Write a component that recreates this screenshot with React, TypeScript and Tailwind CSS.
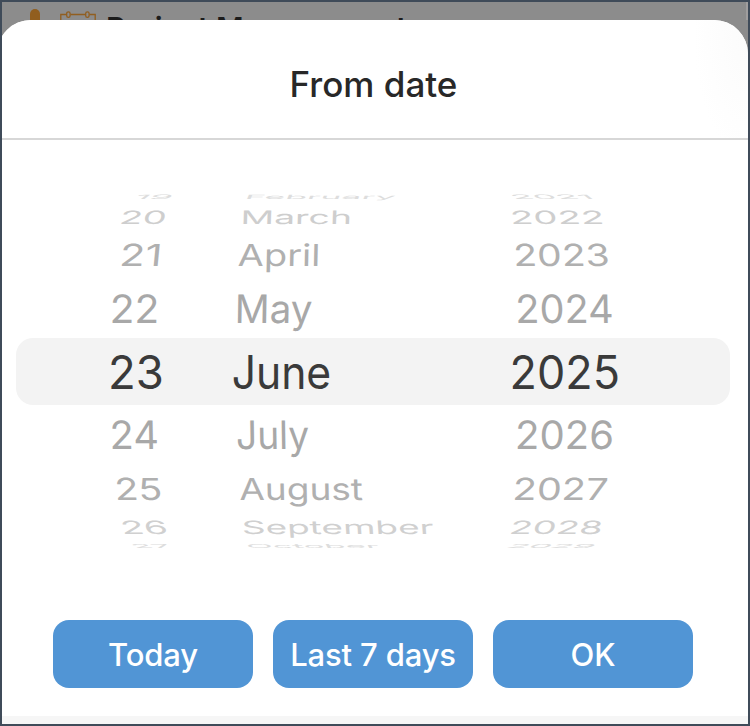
import { useMemo } from 'react'

interface WheelItem {
  text: string
  x: number
  width: number
  skew?: number
}

interface WheelRow {
  height: string
  color: string
  scaleY: number
  items: WheelItem[]
}

const FONT_SIZE = 46

const rowsAbove: WheelRow[] = [
  {
    height: 'h-[20px]',
    color: 'text-[#dddddd]',
    scaleY: 0.13,
    items: [
      { text: '19', x: 135.5, width: 37, skew: -12 },
      { text: 'February', x: 247.5, width: 148, skew: -4 },
      { text: '2021', x: 511.5, width: 80, skew: 12 }
    ]
  },
  {
    height: 'h-[19px]',
    color: 'text-[#cecece]',
    scaleY: 0.4,
    items: [
      { text: '20', x: 121.5, width: 44.5, skew: -6 },
      { text: 'March', x: 243.5, width: 106, skew: -1 },
      { text: '2022', x: 512, width: 90, skew: 3 }
    ]
  },
  {
    height: 'h-[58px]',
    color: 'text-[#b0b0b0]',
    scaleY: 0.66,
    items: [
      { text: '21', x: 122, width: 37.5, skew: -4 },
      { text: 'April', x: 238.5, width: 79.5, skew: -1 },
      { text: '2023', x: 515.5, width: 92.5, skew: 2 }
    ]
  },
  {
    height: 'h-[50px]',
    color: 'text-[#a8a8a8]',
    scaleY: 0.85,
    items: [
      { text: '22', x: 112.2, width: 44.6, skew: -1 },
      { text: 'May', x: 238, width: 74, skew: -1 },
      { text: '2024', x: 517.7, width: 94.5, skew: 1 }
    ]
  }
]

const selectedRow: WheelRow = {
  height: 'h-[67px]',
  color: 'text-[#3a3a3a]',
  scaleY: 1,
  items: [
    { text: '23', x: 111, width: 50.5 },
    { text: 'June', x: 233.5, width: 96 },
    { text: '2025', x: 512.5, width: 105.5 }
  ]
}

const rowsBelow: WheelRow[] = [
  {
    height: 'h-[51px]',
    color: 'text-[#a8a8a8]',
    scaleY: 0.85,
    items: [
      { text: '24', x: 112, width: 45.5, skew: 1 },
      { text: 'July', x: 237.5, width: 71, skew: 1 },
      { text: '2026', x: 517.5, width: 94.5, skew: -1 }
    ]
  },
  {
    height: 'h-[58px]',
    color: 'text-[#b0b0b0]',
    scaleY: 0.66,
    items: [
      { text: '25', x: 116.5, width: 44.5, skew: 3 },
      { text: 'August', x: 240, width: 123, skew: 1 },
      { text: '2027', x: 515, width: 92, skew: -3 }
    ]
  },
  {
    height: 'h-[18px]',
    color: 'text-[#d0d0d0]',
    scaleY: 0.4,
    items: [
      { text: '26', x: 122, width: 44.5, skew: 7 },
      { text: 'September', x: 243, width: 190.5, skew: 2 },
      { text: '2028', x: 511.5, width: 90.5, skew: -7 }
    ]
  },
  {
    height: 'h-[20px]',
    color: 'text-[#dddddd]',
    scaleY: 0.12,
    items: [
      { text: '27', x: 132, width: 38.5, skew: 14 },
      { text: 'October', x: 247, width: 132, skew: 5 },
      { text: '2029', x: 508.5, width: 87, skew: -16 }
    ]
  }
]

function WheelLabel({ item, scaleY }: { item: WheelItem; scaleY: number }) {
  const transform = useMemo(() => {
    const ctx = document.createElement('canvas').getContext('2d')
    if (!ctx) return `translateX(${item.x}px) scaleY(${scaleY})`
    ctx.font = `${FONT_SIZE}px Inter`
    const box = ctx.measureText(item.text)
    const skew = item.skew ?? 0
    // the slant pushes the glyphs out a little on both sides
    const overhang = FONT_SIZE * 0.22 * Math.abs(Math.tan((skew * Math.PI) / 180))
    const left = -box.actualBoundingBoxLeft - overhang
    const right = box.actualBoundingBoxRight + overhang
    const scaleX = item.width / (right - left)
    return `translateX(${item.x - left * scaleX}px) scale(${scaleX}, ${scaleY}) skewX(${skew}deg)`
  }, [item, scaleY])

  return (
    <span className="w-0 origin-left whitespace-nowrap text-[46px] leading-none" style={{ transform }}>
      {item.text}
    </span>
  )
}

function Row({ row }: { row: WheelRow }) {
  return (
    <div className={`flex items-center ${row.height} ${row.color}`}>
      {row.items.map((item) => (
        <WheelLabel key={item.text} item={item} scaleY={row.scaleY} />
      ))}
    </div>
  )
}

function ActionButton({ label }: { label: string }) {
  return (
    <button className="h-[68px] w-[200px] whitespace-nowrap rounded-2xl bg-[#5195d5] pt-0.5 text-[31px] font-medium tracking-[-0.005em] text-white">
      {label}
    </button>
  )
}

export default function App() {
  return (
    <div className="h-[726px] w-[750px] overflow-hidden border-2 border-[#3f4b59] bg-[#8c8c8c] font-['Inter',sans-serif]">
      <div className="flex h-[18px] items-start border-r-2 border-[#a09e9e]">
        <div className="ml-7 mt-[7px] h-8 w-[10px] shrink-0 rounded-t-full bg-[#915e1f]" />
        <svg className="ml-5 mt-[9px] shrink-0" width="36" height="30" fill="none" stroke="#915e1f" strokeWidth="1.3">
          <path d="M6.5 3.5H.8V29M10.5 3.5h15M29.5 3.5h5.7V29" />
          <rect x="6.7" y=".8" width="3.4" height="5.6" rx="1.7" />
          <rect x="25.7" y=".8" width="3.4" height="5.6" rx="1.7" />
        </svg>
        <span className="ml-[10px] mt-[5px] whitespace-nowrap text-[30px] font-semibold leading-[43px] text-[#1c1c1c]">
          Project Management
        </span>
      </div>

      {/* the sheet slides over the dimmed page behind it */}
      <div className="relative -ml-[5px] flex h-[704px] w-[751px] flex-col overflow-hidden rounded-t-[34px] bg-white pl-[5px]">
        <div className="flex h-[120px] items-center justify-center border-b-2 border-[#d7d7d7] bg-[radial-gradient(54px_120px_at_100%_15%,#fbfbfb,#ffffff)] pr-[3px] pt-[11px]">
          <h1 className="whitespace-nowrap text-[35px] font-medium text-[#282828]">From date</h1>
        </div>

        <div className="h-[47px]" />
        <div className="h-[369px]">
          <div className="-ml-[2px]">
            {rowsAbove.map((row) => (
              <Row key={row.items[0].text} row={row} />
            ))}
          </div>
          <div className="my-1 ml-[14px] w-[714px] rounded-[17px] bg-[#f3f3f3]">
            <div className="-ml-4">
              <Row row={selectedRow} />
            </div>
          </div>
          <div className="-ml-[2px]">
            {rowsBelow.map((row) => (
              <Row key={row.items[0].text} row={row} />
            ))}
          </div>
        </div>

        <div className="mt-16 flex gap-5 pl-[51px]">
          <ActionButton label="Today" />
          <ActionButton label="Last 7 days" />
          <ActionButton label="OK" />
        </div>
        <div className="mt-auto h-2 bg-[#f6f6f6]" />
      </div>
    </div>
  )
}
